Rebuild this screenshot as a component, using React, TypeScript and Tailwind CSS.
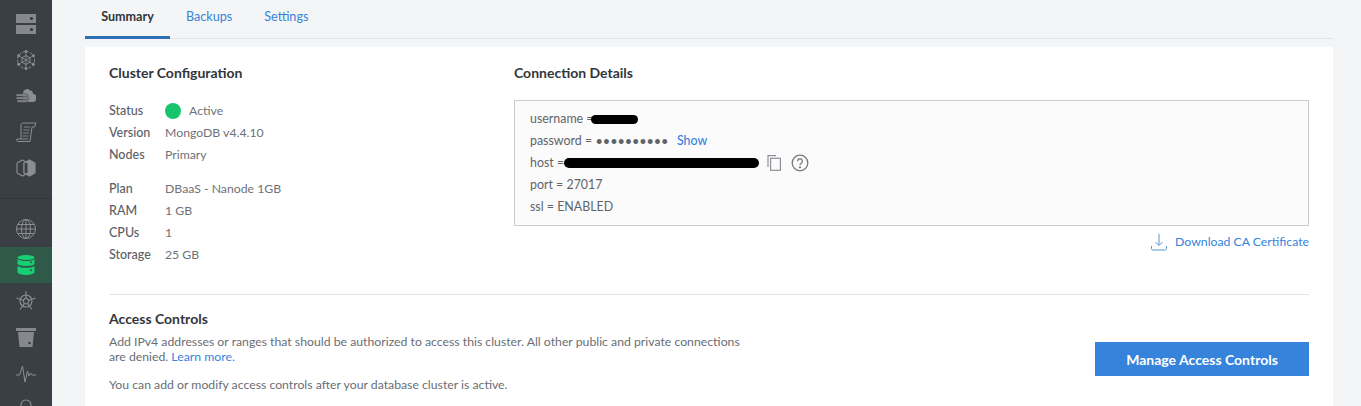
import React from "react";

const g = "#8b8e94";

const Server = () => (
  <svg width="20" height="20" viewBox="0 0 20 20"><rect x="0" y="0" width="20" height="9" fill="#85888e"/><rect x="0" y="11" width="20" height="9" fill="#85888e"/><circle cx="15.5" cy="4.5" r="1.6" fill="#33373d"/><circle cx="15.5" cy="15.5" r="1.6" fill="#33373d"/></svg>
);
const Snow = () => (
  <svg width="20" height="20" viewBox="0 0 20 20" fill="none" stroke={g} strokeWidth="1">
    <circle cx="10" cy="10" r="8.500" strokeDasharray="2.500 1.500"/>
    <polygon points="10,5.500 14,7.750 14,12.250 10,14.500 6,12.250 6,7.750"/>
    <path d="M10 1.500v17M2.600 5.700l14.800 8.600M17.400 5.700L2.600 14.300" strokeWidth=".8"/>
    <circle cx="10" cy="1.500" r="1.100" fill={g}/><circle cx="10" cy="18.500" r="1.100" fill={g}/><circle cx="2.600" cy="5.700" r="1.100" fill={g}/><circle cx="17.400" cy="5.700" r="1.100" fill={g}/><circle cx="2.600" cy="14.300" r="1.100" fill={g}/><circle cx="17.400" cy="14.300" r="1.100" fill={g}/>
  </svg>
);
const Cloud = () => (
  <svg width="20" height="14" viewBox="0 0 20 14" fill="none">
    <path d="M7 4a4 4 0 0 1 7-2.500A3 3 0 0 1 17 5a3 3 0 0 1 3 4.500 3 3 0 0 1-2.500 3.500H7z" fill={g}/>
    <rect x="0" y="5" width="12" height="2.200" rx="1" fill={g} stroke="#3a3e45" strokeWidth=".5"/>
    <rect x="0" y="8" width="13" height="2.200" rx="1" fill={g} stroke="#3a3e45" strokeWidth=".5"/>
    <rect x="1" y="11" width="11" height="2.200" rx="1" fill={g} stroke="#3a3e45" strokeWidth=".5"/>
  </svg>
);
const Scroll = () => (
  <svg width="21" height="21" viewBox="0 0 21 21" fill="none" stroke={g} strokeWidth="1">
    <path d="M5 17V2.500C5 1.500 6 1 7 1h13l-1.500 4h-2.500L14 19.500H2c-1 0-1.500-.7-1.500-1.500L1 17h11" />
    <path d="M8 5h6M7.500 8h6M7 11h6M6.500 14h6" strokeWidth=".9"/>
  </svg>
);
const Venn = () => (
  <svg width="20" height="20" viewBox="0 0 20 20" fill="none" stroke={g} strokeWidth="1.100">
    <polygon points="6.500,2 12,5 12,15 6.500,18 1,15 1,5"/>
    <polygon points="13.500,2 19,5 19,15 13.500,18 8,15 8,5" fill={g}/>
    <polygon points="10,4 12,5 12,15 10,16 8,15 8,5" fill="#3a3e45"/>
  </svg>
);
const Globe = () => (
  <svg width="20" height="20" viewBox="0 0 20 20" fill="none" stroke={g} strokeWidth="1">
    <circle cx="10" cy="10" r="9.500"/><ellipse cx="10" cy="10" rx="4.500" ry="9.500"/><path d="M10 .5v19M.5 10h19M2 5.500h16M2 14.500h16"/>
  </svg>
);
const Db = () => (
  <svg width="18" height="20" viewBox="0 0 18 20">
    <ellipse cx="9" cy="2.500" rx="8.500" ry="2.500" fill="#17cf73"/>
    <path d="M.5 4c1.500 1.500 5 2 8.500 2s7-.5 8.500-2v5c-1.500 1.500-5 1.900-8.500 1.900S2 10.500.5 9z" fill="#17cf73"/>
    <path d="M.5 11c1.500 1.300 5 1.800 8.500 1.800s7-.5 8.500-1.800v6.500C16.500 19 13 20 9 20s-7.500-1-8.500-2.500z" fill="#17cf73"/>
    <circle cx="14" cy="7.300" r="1" fill="#2f5a4a"/><circle cx="14" cy="15.300" r="1" fill="#2f5a4a"/>
  </svg>
);
const Helm = () => (
  <svg width="20" height="20" viewBox="0 0 20 20" fill="none" stroke={g} strokeWidth="1.100">
    <circle cx="10" cy="10" r="6"/><polygon points="10,7 13,9.200 11.800,12.700 8.200,12.700 7,9.200"/>
    <path d="M10 0v7M.5 7L7 9.200M19.500 7L13 9.200M4 18.500l4.200-5.800M16 18.500l-4.200-5.800"/>
  </svg>
);
const Bucket = () => (
  <svg width="20" height="19" viewBox="0 0 20 19">
    <rect x="0" y="0" width="20" height="3" fill="#85888e"/>
    <path d="M2 4h16l-1.500 15h-13z" fill="#85888e"/>
    <circle cx="13.500" cy="15" r="1.200" fill="#33373d"/>
  </svg>
);
const Pulse = () => (
  <svg width="20" height="19" viewBox="0 0 20 19" fill="none" stroke={g} strokeWidth="1">
    <path d="M0 11h3.500L6.500 2 9 18l2.500-11 1.500 5 1.500-3 1.500 2H20"/>
  </svg>
);
const Lock = () => (
  <svg width="20" height="20" viewBox="0 0 20 20" fill="none" stroke={g} strokeWidth="1.100">
    <path d="M5 9V6a5 5 0 0 1 10 0v3"/><rect x="3" y="9" width="14" height="10"/>
  </svg>
);

const SideRow = ({ children, active }: { children: React.ReactNode; active?: boolean }) => (
  <div className={"flex h-9 shrink-0 items-center justify-center " + (active ? "bg-[#2f5a4a]" : "")}>{children}</div>
);

const Row = ({ label, value }: { label: string; value: React.ReactNode }) => (
  <div className="flex h-[22px] items-center">
    <span className="w-14 text-[12.500px] font-medium text-[#5c6066]">{label}</span>
    <span className="text-[12.250px] text-[#6e7278]">{value}</span>
  </div>
);

const Redact = ({ className }: { className: string }) => (
  <span className={"inline-block rounded-full bg-black " + className} />
);

export default function App() {
  return (
    <div className="flex h-[406px] w-[1361px] overflow-hidden bg-[#f4f5f6] font-['Lato','Liberation_Sans',sans-serif] text-[12.250px] text-[#606469]">
      <nav className="flex w-[52px] shrink-0 flex-col bg-[#3a3e45] pt-1.5">
        <SideRow><Server /></SideRow>
        <SideRow><Snow /></SideRow>
        <SideRow><Cloud /></SideRow>
        <SideRow><Scroll /></SideRow>
        <SideRow><Venn /></SideRow>
        <div className="my-3 h-px shrink-0 bg-[#33373d]" />
        <SideRow><Globe /></SideRow>
        <SideRow active><Db /></SideRow>
        <SideRow><Helm /></SideRow>
        <SideRow><Bucket /></SideRow>
        <SideRow><Pulse /></SideRow>
        <SideRow><Lock /></SideRow>
      </nav>

      <main className="ml-[33px] flex w-[1248px] shrink-0 flex-col">
        <div className="flex h-[39px] shrink-0 border-b border-[#e0e2e5] text-[12.600px] leading-[34px]">
          <div className="-mb-px h-[39px] w-[85px] border-b-[3px] border-[#2f6fb8] text-center font-bold text-[#32363c]">Summary</div>
          <div className="ml-4 text-[#3683dc]">Backups</div>
          <div className="ml-8 text-[#3683dc]">Settings</div>
        </div>

        <div className="mt-2 flex-1 bg-white px-6">
          <div className="flex pt-[18px]">
            <section className="w-[405px] shrink-0">
              <h2 className="text-[14px] font-bold leading-4 text-[#32363c]">Cluster Configuration</h2>
              <div className="mt-[19px]">
                <div className="flex h-[22px] items-center">
                  <span className="w-14 text-[12.500px] font-medium text-[#5c6066]">Status</span>
                  <span className="h-4 w-4 rounded-full bg-[#17c46b]" />
                  <span className="ml-2 text-[#6e7278]">Active</span>
                </div>
                <Row label="Version" value="MongoDB v4.4.10" />
                <Row label="Nodes" value="Primary" />
              </div>
              <div className="mt-3">
                <Row label="Plan" value="DBaaS - Nanode 1GB" />
                <Row label="RAM" value="1 GB" />
                <Row label="CPUs" value="1" />
                <Row label="Storage" value="25 GB" />
              </div>
            </section>

            <section className="flex-1">
              <h2 className="text-[14px] font-bold leading-4 text-[#32363c]">Connection Details</h2>
              <div className="mt-[19px] flex h-[126px] flex-col border border-[#cccccc] bg-[#fbfbfb] px-[15px] pt-[7px] text-[12.400px] text-[#606469]">
                <div className="flex h-[22px] items-center">username =<Redact className="-ml-[3px] h-[9px] w-[47px]" /></div>
                <div className="flex h-[22px] items-center">password = <span className="ml-1 text-[11px] font-bold tracking-[0.9px]">••••••••••</span><span className="ml-2 font-medium text-[#3683dc]">Show</span></div>
                <div className="flex h-[22px] items-center">host =
                  <Redact className="h-[10px] w-[195px]" />
                  <svg className="ml-2" width="14" height="16" viewBox="0 0 14 16" fill="none" stroke="#8e9196" strokeWidth="1.200">
                    <path d="M1 12V.6h8" /><rect x="3.600" y="3.300" width="9.800" height="12" />
                  </svg>
                  <svg className="ml-[10px]" width="18" height="18" viewBox="0 0 18 18" fill="none" stroke="#777a80" strokeWidth="1.300">
                    <circle cx="9" cy="9" r="7.800" />
                    <path d="M6.600 7.200a2.400 2.400 0 1 1 3.700 2c-.8.500-1.300 1-1.300 1.800" />
                    <circle cx="9" cy="13.300" r=".5" fill="#777a80" />
                  </svg>
                </div>
                <div className="flex h-[22px] items-center">port = 27017</div>
                <div className="flex h-[22px] items-center">ssl = ENABLED</div>
              </div>
              <div className="mt-[7px] flex items-center justify-end text-[#3683dc]">
                <svg className="mr-2" width="16" height="17" viewBox="0 0 16 17" fill="none" stroke="#5b93cf" strokeWidth="1">
                  <path d="M8 0v11M4.500 8L8 11.500 11.500 8M.5 12v2.500c0 1 .5 1.500 1.500 1.500h12c1 0 1.500-.5 1.500-1.500V12" />
                </svg>
                Download CA Certificate
              </div>
            </section>
          </div>

          <div className="mt-[28px] h-px bg-[#e3e4e6]" />

          <div className="mt-4 flex">
            <div className="w-[640px] shrink-0 leading-[15px]">
              <h2 className="text-[14px] font-bold leading-4 text-[#32363c]">Access Controls</h2>
              <p className="mt-[7px] text-[#6a6e74]">Add IPv4 addresses or ranges that should be authorized to access this cluster. All other public and private connections are denied. <span className="text-[#3683dc]">Learn more.</span></p>
              <p className="mt-[13px] text-[#6a6e74]">You can add or modify access controls after your database cluster is active.</p>
            </div>
            <div className="flex flex-1 justify-end pt-[31px]">
              <button className="h-[34px] w-[214px] bg-[#3683dc] text-[14px] font-bold text-white">Manage Access Controls</button>
            </div>
          </div>
        </div>
      </main>
    </div>
  );
}
